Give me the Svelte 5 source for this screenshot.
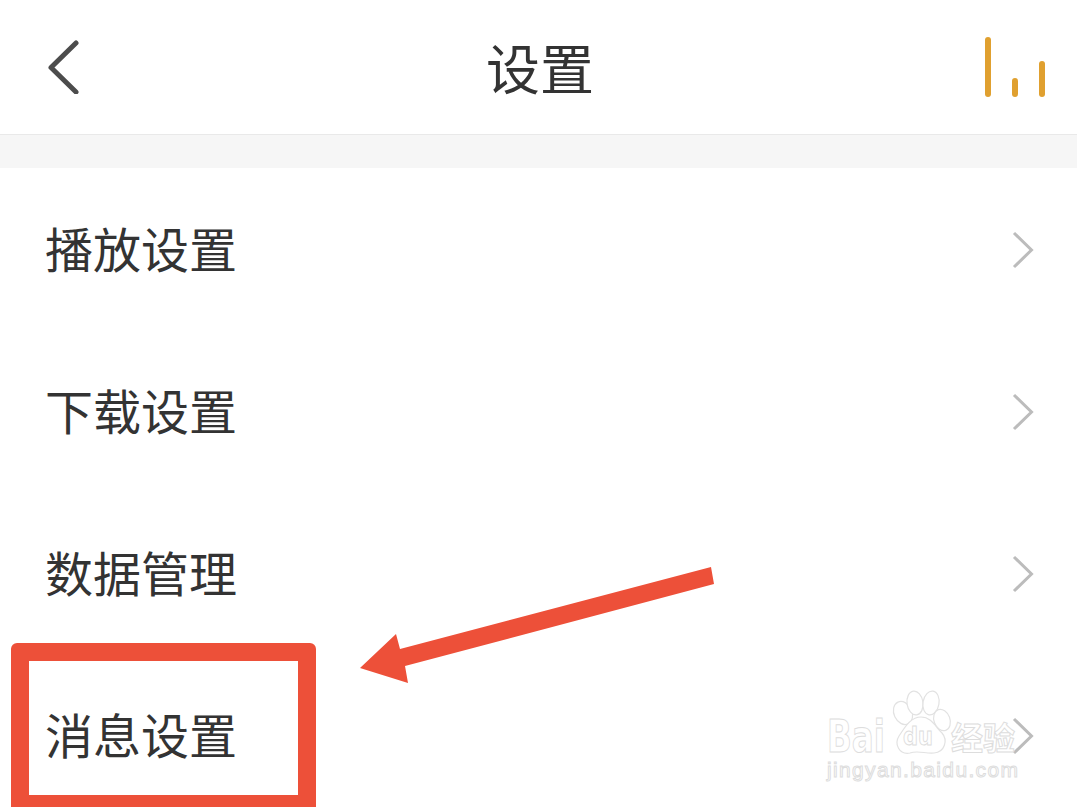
<script lang="ts">
  const rows = ["播放设置", "下载设置", "数据管理", "消息设置"];
</script>

<div class="screen">
  <header class="nav">
    <button class="nav__back" aria-label="返回">
      <svg width="32" height="54" viewBox="0 0 32 54">
        <path d="M29 3 L4 27.5 L29 52" fill="none" stroke="#4c4c4c" stroke-width="5" stroke-linecap="round" stroke-linejoin="round" />
      </svg>
    </button>
    <h1 class="nav__title">设置</h1>
    <div class="nav__bars">
      <span class="bar bar--tall"></span>
      <span class="bar bar--short"></span>
      <span class="bar bar--mid"></span>
    </div>
  </header>

  <div class="band"></div>

  <ul class="list">
    {#each rows as label}
      <li class="row">
        <span class="row__label">{label}</span>
        <svg class="row__arrow" width="24" height="38" viewBox="0 0 24 38">
          <path d="M2 2 L19.5 19 L2 36" fill="none" stroke="#bcbcbc" stroke-width="3" />
        </svg>
      </li>
    {/each}
  </ul>

  <!-- baidu watermark -->
  <svg class="overlay" width="1077" height="807" viewBox="0 0 1077 807">
    <g fill="#fff" stroke="#e2e2e2" stroke-width="1.2">
      <ellipse cx="903" cy="713" rx="9" ry="12" transform="rotate(-25 903 713)" />
      <ellipse cx="915" cy="703" rx="8" ry="12" transform="rotate(-8 915 703)" />
      <ellipse cx="931" cy="703" rx="8" ry="12" transform="rotate(10 931 703)" />
      <ellipse cx="942" cy="720" rx="8" ry="11" transform="rotate(-20 942 720)" />
      <path d="M921 717 C932 717 936 728 942 733 C948 740 945 752 934 753 C926 754 918 750 910 753 C899 755 894 744 899 736 C904 729 910 717 921 717 Z" />
    </g>
    <g class="mark" fill="#fff" stroke="#dddddd" stroke-width="1">
      <text class="mark__bai" x="827" y="752" textLength="58" lengthAdjust="spacingAndGlyphs">Bai</text>
      <text class="mark__du" x="903" y="745" textLength="30" lengthAdjust="spacingAndGlyphs">du</text>
      <text class="mark__cn" x="951" y="750">经验</text>
      <text class="mark__url" x="827" y="777" textLength="191">jingyan.baidu.com</text>
    </g>

    <!-- red annotation -->
    <path d="M17 643 H310 A6 6 0 0 1 316 649 V807 H11 V649 A6 6 0 0 1 17 643 Z M29 661 V795 H298 V661 Z" fill="#ed5039" fill-rule="evenodd" />
    <polygon points="711,567 714,584 405,666 408,683 360,668 396,634 400,649" fill="#ed5039" />
  </svg>
</div>

<style>
  :global(body) {
    margin: 0;
    background: #fff;
  }

  .screen {
    position: relative;
    width: 1077px;
    height: 807px;
    overflow: hidden;
    background: #fff;
    font-family: "Noto Sans CJK SC", "Noto Sans", sans-serif;
    color: #333;
  }

  .nav {
    box-sizing: border-box;
    height: 135px;
    display: grid;
    grid-template-columns: 1fr auto 1fr;
    align-items: center;
    padding: 0 32px;
    border-bottom: 1px solid #e9e9e9;
  }

  .nav__back {
    justify-self: start;
    display: flex;
    margin-left: 15px;
    padding: 0;
    border: 0;
    background: none;
  }

  .nav__title {
    margin: 0 0 1px 3px;
    font-size: 54px;
    font-weight: 400;
    line-height: 1;
    color: #333;
  }

  .nav__bars {
    justify-self: end;
    display: flex;
    align-items: flex-end;
    gap: 21px;
    height: 60px;
  }

  .bar {
    width: 6px;
    border-radius: 3px;
    background: #e0a02f;
  }

  .bar--tall {
    height: 60px;
  }

  .bar--short {
    height: 19px;
  }

  .bar--mid {
    height: 36px;
  }

  .band {
    height: 33px;
    background: #f6f6f6;
  }

  .list {
    margin: 0;
    padding: 0;
    list-style: none;
  }

  .row {
    box-sizing: border-box;
    height: 162px;
    display: flex;
    align-items: center;
    justify-content: space-between;
    padding: 0 41px 0 45px;
  }

  .row__label {
    margin-bottom: 4px;
    font-size: 48px;
    line-height: 1;
    color: #333;
  }

  .row__arrow {
    margin-top: 1px;
  }

  .overlay {
    position: absolute;
    left: 0;
    top: 0;
  }

  .mark {
    font-family: "DejaVu Sans", sans-serif;
  }

  .mark__bai {
    font-size: 44px;
    font-weight: 700;
  }

  .mark__du {
    font-size: 25px;
    font-weight: 700;
  }

  .mark__cn {
    font-family: "Noto Sans CJK SC", sans-serif;
    font-size: 32px;
    font-weight: 700;
  }

  .mark__url {
    font-family: "Liberation Sans", sans-serif;
    font-size: 21px;
  }
</style>
